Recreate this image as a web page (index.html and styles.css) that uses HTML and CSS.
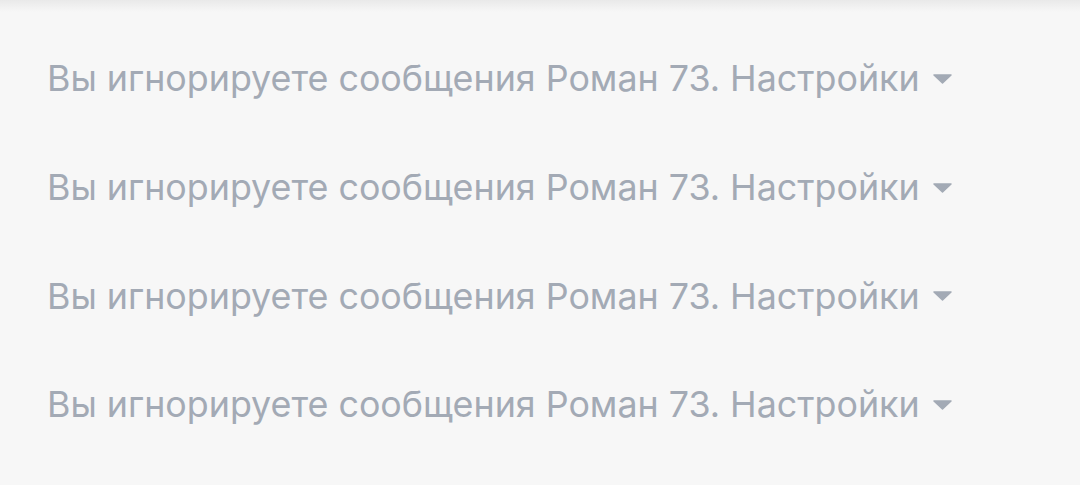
FILE: index.html
```html
<!DOCTYPE html>
<html lang="ru">
<head>
<meta charset="utf-8">
<link rel="stylesheet" href="styles.css">
</head>
<body>
<div class="topbar"></div>
<main class="list">
  <div class="row"><span class="msg">Вы игнорируете сообщения Роман 73. Настройки</span><svg class="caret" width="19" height="10" viewBox="0 0 19 10"><path d="M1 1 L18 1 L9.5 9 Z" fill="currentColor" stroke="currentColor" stroke-width="1.5" stroke-linejoin="round"/></svg></div>
  <div class="row"><span class="msg">Вы игнорируете сообщения Роман 73. Настройки</span><svg class="caret" width="19" height="10" viewBox="0 0 19 10"><path d="M1 1 L18 1 L9.5 9 Z" fill="currentColor" stroke="currentColor" stroke-width="1.5" stroke-linejoin="round"/></svg></div>
  <div class="row"><span class="msg">Вы игнорируете сообщения Роман 73. Настройки</span><svg class="caret" width="19" height="10" viewBox="0 0 19 10"><path d="M1 1 L18 1 L9.5 9 Z" fill="currentColor" stroke="currentColor" stroke-width="1.5" stroke-linejoin="round"/></svg></div>
  <div class="row"><span class="msg">Вы игнорируете сообщения Роман 73. Настройки</span><svg class="caret" width="19" height="10" viewBox="0 0 19 10"><path d="M1 1 L18 1 L9.5 9 Z" fill="currentColor" stroke="currentColor" stroke-width="1.5" stroke-linejoin="round"/></svg></div>
</main>
</body>
</html>
```

FILE: styles.css
```css
html, body {
  margin: 0;
  padding: 0;
  background: #f7f7f7;
  height: 100%;
  overflow: hidden;
}
body {
  font-family: Inter, "Noto Sans", sans-serif;
  color: #a3aab5;
}
.topbar {
  height: 12px;
  background: linear-gradient(to bottom, #e9e9e9, #f7f7f7);
}
.list {
  padding: 12px 0 0 47px;
  display: flex;
  flex-direction: column;
}
.row {
  height: 108.7px;
  display: flex;
  align-items: center;
  gap: 13px;
}
.msg {
  font-size: 35.8px;
  line-height: 44px;
  letter-spacing: 0;
}
.caret {
  display: block;
  margin-top: 1px;
}
```
